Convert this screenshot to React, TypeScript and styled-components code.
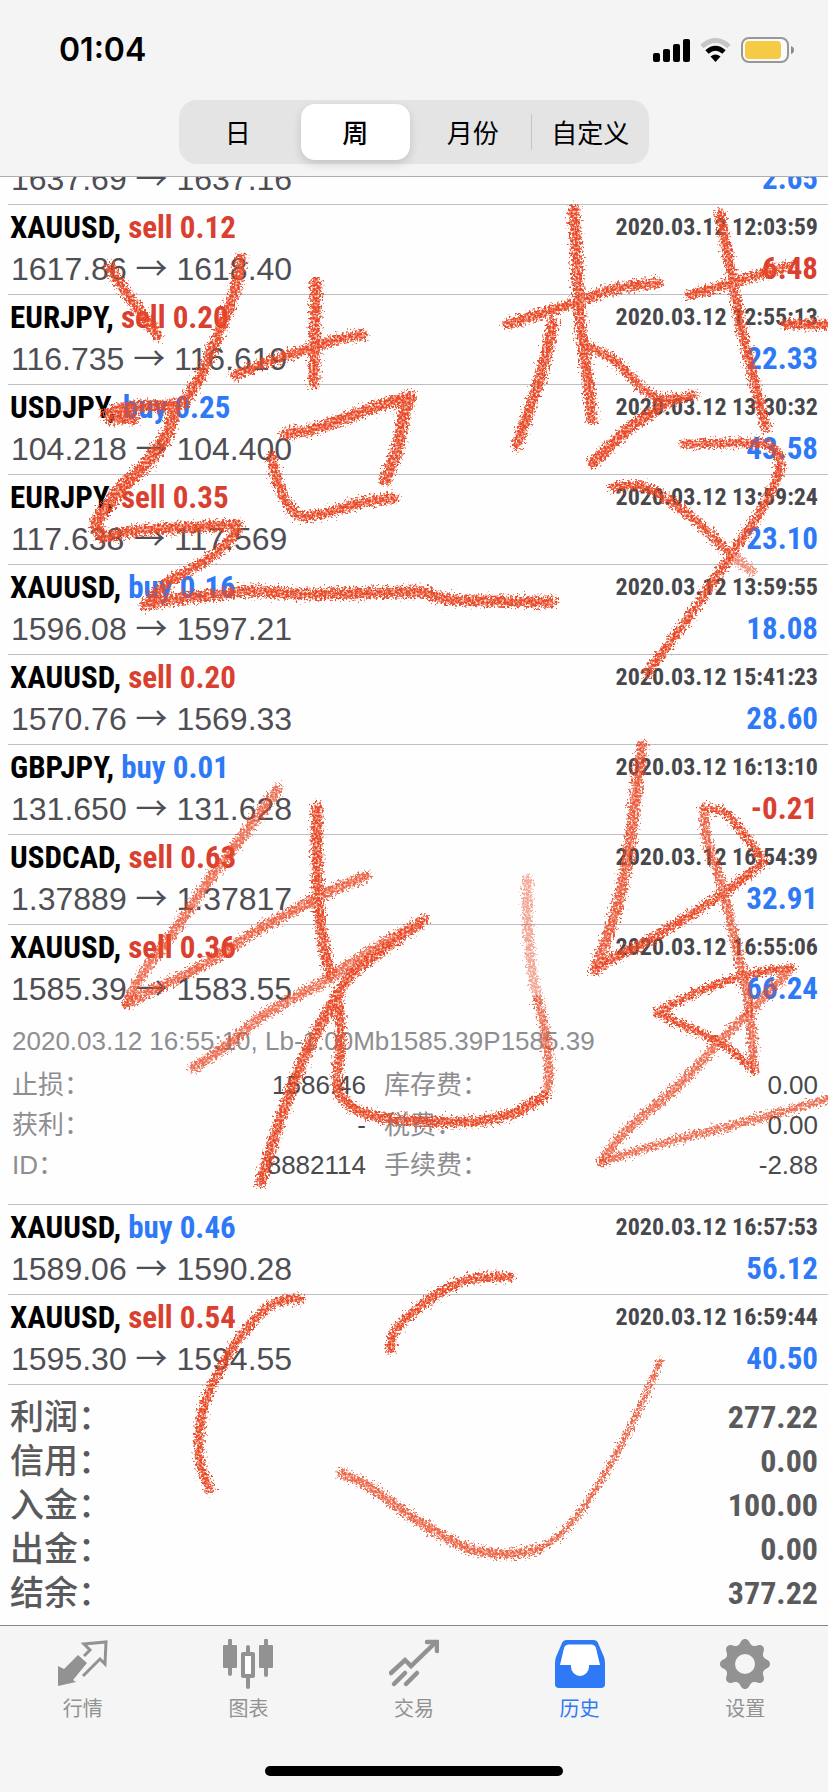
import React from "react";
import styled, { createGlobalStyle } from "styled-components";

const BLUE = "#2e79f6";
const RED = "#d9402f";
const GRAY = "#929292";
const NARROW = `"Roboto Condensed", Roboto, "Liberation Sans", "Noto Sans CJK SC", sans-serif`;
const SANS = `"Liberation Sans", "Noto Sans CJK SC", sans-serif`;

const GlobalStyle = createGlobalStyle`
  *, *::before, *::after { box-sizing: border-box; }
  body { margin: 0; background: #fefefe; font-family: ${SANS}; color: #000; }
  ul, dl, dd, p { margin: 0; padding: 0; }
  ul { list-style: none; }
  button { border: 0; padding: 0; margin: 0; background: none; color: inherit; font: inherit; cursor: pointer; }
`;

const Page = styled.div`
  position: relative;
  display: flex;
  flex-direction: column;
  min-height: 100vh;
  overflow: hidden;
`;

const Header = styled.header`
  position: relative;
  z-index: 1;
  background: #f4f4f4;
  border-bottom: 1px solid #aeaeae;
  padding-bottom: 12px;
`;

const StatusBar = styled.div`
  display: flex;
  align-items: center;
  justify-content: space-between;
  height: 100px;
  padding: 0 34px 0 59px;
`;

const Clock = styled.time`
  font: 600 32px/40px Inter, sans-serif;
`;

const StatusIcons = styled.div`
  display: flex;
  align-items: center;
  gap: 10px;
`;

const Segmented = styled.div`
  display: grid;
  grid-template-columns: repeat(4, 1fr);
  width: 57%;
  max-width: 470px;
  height: 64px;
  margin: 0 auto;
  border-radius: 18px;
  background: #e4e4e4;
`;

const Segment = styled.button<{ $active?: boolean; $divided?: boolean }>`
  position: relative;
  margin: 4px;
  border-radius: 14px;
  font: ${(p) => (p.$active ? 500 : 400)} 26px/54px "Noto Sans CJK SC", sans-serif;
  white-space: nowrap;
  background: ${(p) => (p.$active ? "#fff" : "transparent")};
  box-shadow: ${(p) => (p.$active ? "0 4px 10px rgba(0, 0, 0, 0.14)" : "none")};
  &::before {
    content: "";
    display: ${(p) => (p.$divided ? "block" : "none")};
    position: absolute;
    left: -5px;
    top: 10px;
    bottom: 10px;
    width: 1px;
    background: #c4c4c6;
  }
`;

const Content = styled.main`
  flex: 1;
`;

/* the list is scrolled so that its first deal is partly under the header */
const Deals = styled.ul`
  margin: -17px 0 0 8px;
`;

const Deal = styled.li`
  padding: 0 10px 6px 2px;
  border-bottom: 1px solid #bfbfc1;
`;

const Line = styled.div<{ $height: number }>`
  display: flex;
  justify-content: space-between;
  align-items: center;
  height: ${(p) => p.$height}px;
  line-height: ${(p) => p.$height}px;
  white-space: nowrap;
`;

const Symbol = styled.span`
  font-family: ${NARROW};
  font-weight: 700;
  font-size: 31px;
`;

const Side = styled.span<{ $side: "buy" | "sell" }>`
  color: ${(p) => (p.$side === "buy" ? BLUE : RED)};
`;

const Stamp = styled.time`
  font-family: ${NARROW};
  font-weight: 700;
  font-size: 24px;
  color: #47474c;
`;

const Prices = styled.span`
  padding-left: 1px;
  font-size: 32px;
  color: #4e4e54;
`;

const Arrow = styled.span`
  display: inline-block;
  width: 32px;
  line-height: 20px;
  text-align: center;
  font-family: "Noto Sans CJK SC", sans-serif;
`;

const Profit = styled.span<{ $loss?: boolean }>`
  font-family: ${NARROW};
  font-weight: 700;
  font-size: 31px;
  color: ${(p) => (p.$loss ? RED : BLUE)};
`;

const Details = styled.div`
  padding: 13px 0 13px 2px;
  font-size: 26px;
  color: #8e8e92;
`;

const Comment = styled.p`
  line-height: 40px;
  white-space: nowrap;
  margin-bottom: 4px;
`;

const DetailGrid = styled.dl`
  display: grid;
  grid-template-columns: 354fr 434fr;
  column-gap: 18px;
`;

const DetailPair = styled.div`
  display: flex;
  justify-content: space-between;
  line-height: 40px;
  height: 40px;
  dd { color: #4a4a4e; }
`;

const Summary = styled.dl`
  padding: 10px 10px;
`;

const SummaryRow = styled.div`
  display: flex;
  justify-content: space-between;
  height: 44px;
  line-height: 44px;
  color: #5a5a5c;
  dt { font-family: ${SANS}; font-weight: 500; font-size: 34px; }
  dd { font-family: ${NARROW}; font-weight: 700; font-size: 32px; }
`;

const Footer = styled.footer`
  background: #f5f5f5;
  border-top: 1px solid #858585;
`;

const Tabs = styled.nav`
  display: grid;
  grid-template-columns: repeat(5, 1fr);
  height: 140px;
  padding-top: 13px;
`;

const Tab = styled.button<{ $active?: boolean }>`
  display: flex;
  flex-direction: column;
  align-items: center;
  align-self: start;
  gap: 4px;
  color: ${(p) => (p.$active ? BLUE : GRAY)};
  font: 400 20px/30px "Noto Sans CJK SC", sans-serif;
`;

const HomeIndicator = styled.div`
  width: 36%;
  height: 10px;
  margin: 0 auto 16px;
  border-radius: 5px;
  background: #000;
`;

const Ink = styled.svg`
  position: absolute;
  z-index: 2;
  top: 0;
  left: 0;
  width: 100%;
  height: auto;
  pointer-events: none;
`;

type DealData = {
  symbol?: string;
  side?: "buy" | "sell";
  lots?: string;
  time?: string;
  open: string;
  close: string;
  profit: string;
  loss?: boolean;
  comment?: string;
  details?: [string, string][];
};

const deals: DealData[] = [
  { open: "1637.69", close: "1637.16", profit: "2.65" },
  { symbol: "XAUUSD", side: "sell", lots: "0.12", time: "2020.03.12 12:03:59", open: "1617.86", close: "1618.40", profit: "6.48", loss: true },
  { symbol: "EURJPY", side: "sell", lots: "0.20", time: "2020.03.12 12:55:13", open: "116.735", close: "116.619", profit: "22.33" },
  { symbol: "USDJPY", side: "buy", lots: "0.25", time: "2020.03.12 13:30:32", open: "104.218", close: "104.400", profit: "43.58" },
  { symbol: "EURJPY", side: "sell", lots: "0.35", time: "2020.03.12 13:59:24", open: "117.638", close: "117.569", profit: "23.10" },
  { symbol: "XAUUSD", side: "buy", lots: "0.16", time: "2020.03.12 13:59:55", open: "1596.08", close: "1597.21", profit: "18.08" },
  { symbol: "XAUUSD", side: "sell", lots: "0.20", time: "2020.03.12 15:41:23", open: "1570.76", close: "1569.33", profit: "28.60" },
  { symbol: "GBPJPY", side: "buy", lots: "0.01", time: "2020.03.12 16:13:10", open: "131.650", close: "131.628", profit: "-0.21", loss: true },
  { symbol: "USDCAD", side: "sell", lots: "0.63", time: "2020.03.12 16:54:39", open: "1.37889", close: "1.37817", profit: "32.91" },
  {
    symbol: "XAUUSD", side: "sell", lots: "0.36", time: "2020.03.12 16:55:06", open: "1585.39", close: "1583.55", profit: "66.24",
    comment: "2020.03.12 16:55:10, Lb-1.00Mb1585.39P1585.39",
    details: [
      ["止损：", "1586.46"], ["库存费：", "0.00"],
      ["获利：", "-"], ["税费：", "0.00"],
      ["ID：", "8882114"], ["手续费：", "-2.88"],
    ],
  },
  { symbol: "XAUUSD", side: "buy", lots: "0.46", time: "2020.03.12 16:57:53", open: "1589.06", close: "1590.28", profit: "56.12" },
  { symbol: "XAUUSD", side: "sell", lots: "0.54", time: "2020.03.12 16:59:44", open: "1595.30", close: "1594.55", profit: "40.50" },
];

const totals: [string, string][] = [
  ["利润：", "277.22"],
  ["信用：", "0.00"],
  ["入金：", "100.00"],
  ["出金：", "0.00"],
  ["结余：", "377.22"],
];

/* gear outline: a circle whose radius swells into eight teeth */
const gearPath = (() => {
  const pts: string[] = [];
  for (let i = 0; i < 160; i++) {
    const a = (i / 160) * Math.PI * 2;
    const r = 22.4 + 2.6 * Math.tanh(0.9 * Math.cos(8 * a)) / Math.tanh(0.9);
    pts.push(`${(25 + r * Math.cos(a)).toFixed(2)} ${(25 + r * Math.sin(a)).toFixed(2)}`);
  }
  return `M${pts.join("L")}ZM35 25a10 10 0 1 0 -20 0a10 10 0 1 0 20 0Z`;
})();

const icons: Record<string, React.ReactNode> = {
  行情: (
    <>
      <path d="M0 27L6 30L20 16L29 24L15 41L18 43L0 47Z" fill="currentColor" />
      <path d="M26 17L32 11L26 5L48 3L47 25L42 20L25 37" fill="none" stroke="currentColor" strokeWidth="3" />
    </>
  ),
  图表: (
    <>
      <path d="M7 1.5V35M43 1.5V36M25 8V14M25 38V48" stroke="currentColor" strokeWidth="4" strokeLinecap="round" />
      <rect x="0" y="6" width="14" height="23" rx="1" fill="currentColor" />
      <rect x="36" y="6" width="14" height="23" rx="1" fill="currentColor" />
      <rect x="20" y="15" width="10" height="22" fill="#fff" stroke="currentColor" strokeWidth="4" strokeLinejoin="round" />
    </>
  ),
  交易: (
    <g fill="none" stroke="currentColor" strokeWidth="4.5" strokeLinecap="round">
      <path d="M2 34L16 21L22 27L46 4" />
      <path d="M38 3H48V12" />
      <path d="M5 45L16 34M17 45L28 34" />
    </g>
  ),
  历史: (
    <>
      <path d="M12 1H38Q42 1 43 4L49 18Q50 21 50 24V45Q50 49 46 49H4Q0 49 0 45V24Q0 21 1 18L7 4Q8 1 12 1Z" fill="currentColor" />
      <path d="M14 5.5H36Q40 5.5 41 9L45 26H34V28A9 9 0 0 1 16 28V26H5L9 9Q10 5.5 14 5.5Z" fill="#fff" />
    </>
  ),
  设置: <path d={gearPath} fill="currentColor" fillRule="evenodd" />,
};

type Point = [number, number];

/* runs of points; each run is drawn as one smooth curve */
const strokes: { w: number; o?: number; pts: Point[] }[] = [
  { w: 10, pts: [[110, 268], [128, 296], [145, 318], [157, 336]] },
  { w: 11, pts: [[241, 258], [237, 283], [227, 313], [213, 347], [200, 377], [183, 404]] },
  { w: 11, pts: [[106, 414], [130, 407], [174, 405]] },
  { w: 11, pts: [[110, 418], [134, 419]] },
  { w: 13, pts: [[174, 405], [168, 432], [147, 463], [117, 493], [97, 523], [104, 537]] },
  { w: 11, pts: [[104, 537], [143, 530], [200, 527], [238, 525]] },
  { w: 10, pts: [[238, 525], [230, 540], [207, 560], [167, 583], [145, 605]] },
  { w: 11, pts: [[145, 605], [175, 599], [213, 595], [253, 591], [300, 594], [413, 592], [430, 594], [454, 600], [552, 602]] },
  { w: 11, pts: [[316, 282], [315, 330], [314, 383]] },
  { w: 10, pts: [[235, 375], [262, 364], [310, 348], [340, 339], [363, 335]] },
  { w: 11, pts: [[285, 434], [310, 430], [340, 420], [375, 407], [410, 397]] },
  { w: 12, pts: [[410, 397], [404, 415], [397, 450], [385, 480]] },
  { w: 10, pts: [[272, 457], [278, 483], [287, 503], [297, 515]] },
  { w: 10, pts: [[304, 517], [330, 512], [360, 503], [394, 498]] },
  { w: 11, pts: [[574, 210], [577, 267], [580, 320], [587, 374], [592, 419]] },
  { w: 10, pts: [[507, 324], [531, 317], [574, 303], [614, 289], [658, 283]] },
  { w: 11, pts: [[553, 323], [541, 374], [517, 445]] },
  { w: 9, pts: [[587, 346], [614, 360], [644, 390], [667, 400], [694, 395]] },
  { w: 11, pts: [[672, 398], [650, 414], [627, 430], [593, 463]] },
  { w: 10, pts: [[720, 214], [732, 278], [742, 331], [754, 381], [766, 427]] },
  { w: 10, pts: [[690, 295], [731, 283], [788, 266]] },
  { w: 10, pts: [[785, 324], [836, 325]] },
  { w: 9, pts: [[684, 444], [755, 443], [774, 449], [780, 467], [772, 489], [757, 517], [731, 555], [691, 614], [647, 673]] },
  { w: 9, pts: [[614, 487], [641, 486], [667, 499], [697, 522], [729, 553]] },
  { w: 9, o: 0.6, pts: [[729, 553], [752, 571]] },
  { w: 10, o: 0.8, pts: [[278, 789], [245, 833], [207, 883], [173, 933], [143, 973], [127, 1003]] },
  { w: 10, o: 0.85, pts: [[127, 1003], [160, 987], [207, 963], [253, 933], [300, 907], [333, 890], [366, 876]] },
  { w: 11, pts: [[317, 808], [317, 860], [320, 920], [330, 975]] },
  { w: 10, o: 0.8, pts: [[194, 1068], [227, 1045], [267, 1013], [327, 980], [367, 953], [424, 920]] },
  { w: 11, pts: [[422, 922], [383, 949], [350, 976], [333, 1003], [316, 1033], [300, 1067], [280, 1120], [261, 1182]] },
  { w: 10, pts: [[338, 1003], [341, 1037], [337, 1083], [347, 1103], [370, 1115], [414, 1121], [477, 1121], [514, 1113], [545, 1096]] },
  { w: 9, o: 0.8, pts: [[545, 1096], [549, 1070], [544, 1027], [538, 1000]] },
  { w: 9, o: 0.5, pts: [[538, 1000], [532, 970], [528, 927], [527, 879]] },
  { w: 11, o: 0.9, pts: [[642, 745], [636, 793], [627, 863], [614, 917], [595, 970]] },
  { w: 9, pts: [[595, 970], [614, 958], [654, 937], [721, 895], [764, 862]] },
  { w: 8, pts: [[764, 862], [741, 830], [724, 812], [704, 808]] },
  { w: 9, o: 0.85, pts: [[704, 808], [707, 840], [721, 883], [734, 937], [747, 993], [752, 1037], [754, 1070]] },
  { w: 8, pts: [[754, 1070], [724, 1045], [687, 1027], [657, 1013]] },
  { w: 8, pts: [[657, 1013], [697, 992], [747, 975], [791, 968]] },
  { w: 9, o: 0.8, pts: [[791, 968], [764, 997], [724, 1037], [681, 1083], [627, 1130], [601, 1162]] },
  { w: 8, o: 0.8, pts: [[601, 1162], [667, 1142], [734, 1125], [836, 1097]] },
  { w: 9, pts: [[300, 1299], [275, 1303], [248, 1327], [227, 1357], [206, 1400], [199, 1440], [201, 1467], [210, 1489]] },
  { w: 9, pts: [[510, 1277], [470, 1279], [433, 1297], [398, 1327], [390, 1350]] },
  { w: 9, o: 0.85, pts: [[342, 1473], [370, 1487], [412, 1517], [465, 1547], [507, 1554], [539, 1549]] },
  { w: 6, o: 0.85, pts: [[539, 1549], [565, 1530], [597, 1487], [634, 1420], [660, 1361]] },
];

function smooth(pts: Point[]) {
  let d = `M${pts[0][0]} ${pts[0][1]}`;
  for (let i = 0; i < pts.length - 1; i++) {
    const a = pts[i - 1] ?? pts[i];
    const b = pts[i];
    const c = pts[i + 1];
    const e = pts[i + 2] ?? c;
    d += `C${b[0] + (c[0] - a[0]) / 6} ${b[1] + (c[1] - a[1]) / 6} ${c[0] - (e[0] - b[0]) / 6} ${c[1] - (e[1] - b[1]) / 6} ${c[0]} ${c[1]}`;
  }
  return d;
}

function CrayonDrawing() {
  return (
    <Ink viewBox="0 0 828 1792" aria-hidden="true">
      <defs>
        <filter id="crayon" filterUnits="userSpaceOnUse" x="0" y="0" width="828" height="1792" colorInterpolationFilters="sRGB">
          <feTurbulence type="fractalNoise" baseFrequency="0.45" numOctaves="2" seed="4" result="noise" />
          <feDisplacementMap in="SourceGraphic" in2="noise" scale="15" xChannelSelector="R" yChannelSelector="G" result="rough" />
          <feColorMatrix in="noise" type="matrix" values="0 0 0 0 0  0 0 0 0 0  0 0 0 0 0  0 0 2.4 0 -0.35" result="grain" />
          <feComposite in="rough" in2="grain" operator="in" />
        </filter>
      </defs>
      <g filter="url(#crayon)" fill="none" stroke="#ea4a27" strokeLinecap="round" strokeLinejoin="round">
        {strokes.map((s, i) => (
          <path key={i} d={smooth(s.pts)} strokeWidth={s.w} opacity={s.o ?? 1} />
        ))}
      </g>
    </Ink>
  );
}

function DealRow({ deal }: { deal: DealData }) {
  return (
    <Deal>
      {deal.side && (
        <Line $height={45}>
          <Symbol>
            {deal.symbol}, <Side $side={deal.side}>{deal.side} {deal.lots}</Side>
          </Symbol>
          <Stamp>{deal.time}</Stamp>
        </Line>
      )}
      <Line $height={38}>
        <Prices>
          {deal.open} <Arrow>→</Arrow> {deal.close}
        </Prices>
        <Profit $loss={deal.loss}>{deal.profit}</Profit>
      </Line>
      {deal.details && (
        <Details>
          <Comment>{deal.comment}</Comment>
          <DetailGrid>
            {deal.details.map(([label, value]) => (
              <DetailPair key={label}>
                <dt>{label}</dt>
                <dd>{value}</dd>
              </DetailPair>
            ))}
          </DetailGrid>
        </Details>
      )}
    </Deal>
  );
}

export default function App() {
  return (
    <Page lang="zh-CN">
      <GlobalStyle />
      <Header>
        <StatusBar>
          <Clock>01:04</Clock>
          <StatusIcons>
            <svg width="37" height="24" viewBox="0 0 37 24" aria-hidden="true">
              <rect x="0" y="15" width="7" height="9" rx="2" />
              <rect x="10" y="11" width="7" height="13" rx="2" />
              <rect x="20" y="6" width="7" height="18" rx="2" />
              <rect x="30" y="1" width="7" height="23" rx="2" />
            </svg>
            <svg width="31" height="24" viewBox="0 0 31 24" fill="none" aria-hidden="true">
              <path d="M2 8.5Q15.5 -3.5 29 8.5" stroke="#c6c6c6" strokeWidth="5" />
              <path d="M7 14Q15.5 6.5 24 14" stroke="#000" strokeWidth="5" />
              <path d="M10.5 18.5Q15.5 14.5 20.5 18.5L15.5 24Z" fill="#000" />
            </svg>
            <svg width="53" height="26" viewBox="0 0 53 26" aria-hidden="true">
              <rect x="1" y="1" width="46" height="24" rx="7" fill="#fbfbfb" stroke="#97979a" strokeWidth="2" />
              <rect x="4" y="4" width="36" height="18" rx="4" fill="#f5cb45" />
              <path d="M50 9Q53 10 53 13Q53 16 50 17Z" fill="#8c8c8e" />
            </svg>
          </StatusIcons>
        </StatusBar>
        <Segmented role="group" aria-label="周期">
          <Segment type="button">日</Segment>
          <Segment type="button" $active aria-pressed="true">周</Segment>
          <Segment type="button">月份</Segment>
          <Segment type="button" $divided>自定义</Segment>
        </Segmented>
      </Header>
      <Content>
        <Deals>
          {deals.map((d) => (
            <DealRow key={d.open} deal={d} />
          ))}
        </Deals>
        <Summary>
          {totals.map(([label, value]) => (
            <SummaryRow key={label}>
              <dt>{label}</dt>
              <dd>{value}</dd>
            </SummaryRow>
          ))}
        </Summary>
      </Content>
      <Footer>
        <Tabs>
          {Object.entries(icons).map(([name, icon]) => (
            <Tab key={name} type="button" $active={name === "历史"}>
              <svg width="50" height="50" viewBox="0 0 50 50" aria-hidden="true">{icon}</svg>
              {name}
            </Tab>
          ))}
        </Tabs>
        <HomeIndicator />
      </Footer>
      <CrayonDrawing />
    </Page>
  );
}
